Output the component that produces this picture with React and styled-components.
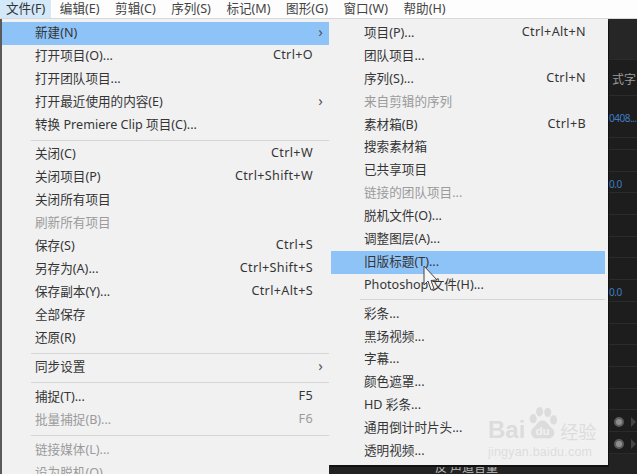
import React from "react";
import styled, { createGlobalStyle } from "styled-components";

const fileItems = [
  { label: "新建(N)", arrow: true, active: true },
  { label: "打开项目(O)...", keys: "Ctrl+O" },
  { label: "打开团队项目..." },
  { label: "打开最近使用的内容(E)", arrow: true },
  { label: "转换 Premiere Clip 项目(C)..." },
  { sep: true },
  { label: "关闭(C)", keys: "Ctrl+W" },
  { label: "关闭项目(P)", keys: "Ctrl+Shift+W" },
  { label: "关闭所有项目" },
  { label: "刷新所有项目", off: true },
  { label: "保存(S)", keys: "Ctrl+S" },
  { label: "另存为(A)...", keys: "Ctrl+Shift+S" },
  { label: "保存副本(Y)...", keys: "Ctrl+Alt+S" },
  { label: "全部保存" },
  { label: "还原(R)" },
  { sep: true },
  { label: "同步设置", arrow: true },
  { sep: true, wide: true },
  { label: "捕捉(T)...", keys: "F5" },
  { label: "批量捕捉(B)...", keys: "F6", off: true },
  { sep: true, wide: true },
  { label: "链接媒体(L)...", off: true },
  { label: "设为脱机(O)...", off: true },
];

const newItems = [
  { label: "项目(P)...", keys: "Ctrl+Alt+N" },
  { label: "团队项目..." },
  { label: "序列(S)...", keys: "Ctrl+N" },
  { label: "来自剪辑的序列", off: true },
  { label: "素材箱(B)", keys: "Ctrl+B" },
  { label: "搜索素材箱" },
  { label: "已共享项目" },
  { label: "链接的团队项目...", off: true },
  { label: "脱机文件(O)..." },
  { label: "调整图层(A)..." },
  { label: "旧版标题(T)...", active: true },
  { label: "Photoshop 文件(H)..." },
  { sep: true },
  { label: "彩条..." },
  { label: "黑场视频..." },
  { label: "字幕..." },
  { label: "颜色遮罩..." },
  { label: "HD 彩条..." },
  { label: "通用倒计时片头..." },
  { label: "透明视频..." },
];

const menuNames = ["编辑(E)", "剪辑(C)", "序列(S)", "标记(M)", "图形(G)", "窗口(W)", "帮助(H)"];

// rows of the dark panel that shows to the right of the menus
const panelRows = [
  { h: 41, head: true },
  { h: 36, title: "式字" },
  { h: 42, value: "0408..." },
  { h: 12 },
  { h: 21.7 },
  { h: 21.7, value: "0.0" },
  ...Array(4).fill({ h: 21.7 }),
  { h: 21.7, value: "0.0" },
  ...Array(5).fill({ h: 21.7 }),
  { h: 21.7, knob: true },
  { h: 21.7, knob: true },
];

const MenuList = ({ items, Wrap, step, rightPad }) => (
  <Wrap>
    {items.map((item, i) =>
      item.sep ? (
        <Separator key={i} $wide={item.wide} />
      ) : (
        <Row key={i} $active={item.active} $off={item.off} $step={step} $rightPad={rightPad}>
          <span>{item.label}</span>
          {item.keys && <Keys>{item.keys}</Keys>}
          {item.arrow && <Arrow>›</Arrow>}
        </Row>
      )
    )}
  </Wrap>
);

export default function App() {
  return (
    <>
      <GlobalStyle />
      <Page>
        <MenuBar>
          <FileMenu>文件(F)</FileMenu>
          {menuNames.map((name) => (
            <MenuName key={name}>{name}</MenuName>
          ))}
        </MenuBar>
        <Stage>
          {panelRows.map((row, i) => (
            <PanelRow key={i} $h={row.h} $head={row.head}>
              {row.title && <PanelTitle>{row.title}</PanelTitle>}
              {row.value && <PanelValue>{row.value}</PanelValue>}
              {row.knob && (
                <>
                  <Knob />
                  <KnobArrow />
                </>
              )}
            </PanelRow>
          ))}
          <FooterRow>反 声道音量</FooterRow>
          <MenuList items={fileItems} Wrap={FileList} step={23} rightPad={16} />
          <MenuList items={newItems} Wrap={NewList} step={22.9} rightPad={19} />
          <Cursor viewBox="0 0 16 26">
            <path d="M1 1 L1 20 L5 16 L8 25 L11 23.6 L8 15.5 L14 15 Z" fill="#f6f6f6" stroke="#444" strokeWidth="1" />
          </Cursor>
          <Watermark>
            <WatermarkTop>
              <span>Bai</span>
              <Paw viewBox="0 0 60 60">
                <ellipse cx="14" cy="21" rx="6" ry="8" />
                <ellipse cx="25" cy="9" rx="6" ry="8" />
                <ellipse cx="39" cy="10" rx="6" ry="8" />
                <ellipse cx="49" cy="23" rx="6" ry="8" />
                <path d="M30 24 C22 24 20 32 14 37 C7 43 11 56 21 55 C27 54 33 54 39 55 C50 56 54 43 46 37 C40 32 38 24 30 24 Z" />
                <text x="30" y="48" textAnchor="middle">du</text>
              </Paw>
              <WatermarkCn>经验</WatermarkCn>
            </WatermarkTop>
            <WatermarkUrl>jingyan.baidu.com</WatermarkUrl>
          </Watermark>
        </Stage>
      </Page>
    </>
  );
}

const GlobalStyle = createGlobalStyle`
  html, body {
    margin: 0;
    padding: 0;
    background: #1e1e1e;
  }
`;

const Page = styled.div`
  width: 637px;
  height: 474px;
  overflow: hidden;
  display: flex;
  flex-direction: column;
  font-family: "Noto Sans", "Noto Sans CJK SC", sans-serif;
  font-size: 12.6px;
  color: #333;
`;

const MenuBar = styled.div`
  height: 19px;
  box-sizing: border-box;
  flex: none;
  display: flex;
  align-items: center;
  gap: 15.5px;
  background: #fdfdfd;
  border-bottom: 1px solid #d8d8d8;
`;

const MenuName = styled.div`
  flex: none;
  line-height: 18px;
  color: #444;
  white-space: nowrap;
`;

const FileMenu = styled(MenuName)`
  padding: 0 6px;
  margin-right: -7px;
  background: #d3e9fa;
  color: #333;
`;

const Stage = styled.div`
  position: relative;
  flex: 1;
  display: flex;
  flex-direction: column;
  background: #1c1c1c;
`;

const PanelRow = styled.div`
  flex: none;
  height: ${(p) => p.$h}px;
  box-sizing: border-box;
  padding: 3px 0 0 609px;
  display: flex;
  align-items: center;
  white-space: nowrap;
  overflow: hidden;
  background: ${(p) => (p.$head ? "#262626" : "#1d1d1d")};
  border-bottom: 1px solid #2b2b2b;
`;

const PanelTitle = styled.span`
  margin-left: 3px;
  font-size: 12px;
  color: #9a9a9a;
`;

const PanelValue = styled.span`
  font-size: 10px;
  letter-spacing: -0.5px;
  color: #3d7cc4;
`;

const Knob = styled.span`
  width: 6px;
  height: 6px;
  margin-left: 5px;
  border-radius: 50%;
  background: #8f8f8f;
  border: 2px solid #5c5c5c;
`;

const KnobArrow = styled.span`
  margin-left: 7px;
  border-left: 5px solid #444;
  border-top: 5px solid transparent;
  border-bottom: 5px solid transparent;
`;

const FooterRow = styled.div`
  flex: 1;
  padding-left: 435px;
  padding-top: 8px;
  font-size: 12px;
  line-height: 12px;
  color: #bbb;
  white-space: nowrap;
  background: #222;
`;

const MenuPanel = styled.div`
  position: absolute;
  top: 0;
  box-sizing: border-box;
  background: #f1f1f2;
`;

const FileList = styled(MenuPanel)`
  left: 2px;
  width: 327px;
  height: 455px;
  padding-top: 3px;
  box-shadow: -2px 0 0 #5a5a5a;
`;

const NewList = styled(MenuPanel)`
  left: 329px;
  width: 279px;
  height: 446px;
  padding: 3px 3px 0 2px;
  box-shadow: 1px 2px 0 #111;
`;

const Row = styled.div`
  height: ${(p) => p.$step}px;
  box-sizing: border-box;
  padding: 0 ${(p) => p.$rightPad}px 4px 33px;
  display: flex;
  align-items: center;
  justify-content: space-between;
  position: relative;
  white-space: nowrap;
  color: ${(p) => (p.$off ? "#9b9b9b" : "#353535")};
  background: ${(p) => (p.$active ? "#8ec3f8" : "transparent")};
`;

const Keys = styled.span`
  letter-spacing: 0.35px;
`;

const Arrow = styled.span`
  position: absolute;
  right: 6px;
  top: -1px;
  font-size: 15px;
  line-height: 20px;
  color: #555;
`;

const Separator = styled.div`
  height: 1px;
  margin: ${(p) => (p.$wide ? "3px" : "2.5px")} 0 ${(p) => (p.$wide ? "3px" : "2.5px")} 29px;
  background: #d6d6d6;
`;

const Cursor = styled.svg`
  position: absolute;
  left: 423px;
  top: 246px;
  width: 16px;
  height: 26px;
`;

const Watermark = styled.div`
  position: absolute;
  left: 488px;
  top: 387px;
  width: 116px;
  color: rgba(215, 215, 215, 0.8);
  font-family: "Liberation Sans", sans-serif;
`;

const WatermarkTop = styled.div`
  display: flex;
  align-items: flex-end;
  height: 36px;
  font-size: 24px;
  font-weight: 700;
  line-height: 24px;
`;

const Paw = styled.svg`
  width: 35px;
  height: 36px;
  flex: none;
  fill: rgba(215, 215, 215, 0.8);

  text {
    font-size: 20px;
    font-weight: 700;
    fill: #f1f1f2;
    font-family: "Liberation Sans", sans-serif;
  }
`;

const WatermarkCn = styled.span`
  font-size: 18px;
  font-weight: 400;
  line-height: 22px;
  font-family: "Noto Sans CJK SC", sans-serif;
`;

const WatermarkUrl = styled.div`
  margin-top: 3px;
  font-size: 12.5px;
  line-height: 14px;
  letter-spacing: 0.2px;
  white-space: nowrap;
`;
